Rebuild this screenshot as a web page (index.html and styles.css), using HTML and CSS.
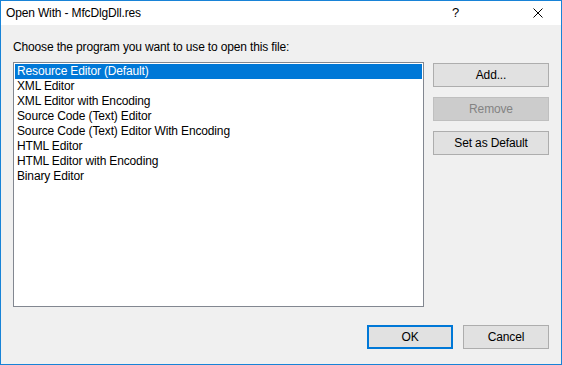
FILE: index.html
```html
<!DOCTYPE html>
<html lang="en">
<head>
  <meta charset="UTF-8" />
  <title>Open With - MfcDlgDll.res</title>
  <link rel="stylesheet" href="styles.css">
</head>
<body>
  <div class="window">
    <div class="titlebar">
      <span class="title">Open With - MfcDlgDll.res</span>
      <span class="help">?</span>
      <span class="close">
        <svg width="10" height="10" viewBox="0 0 10 10"><path d="M0.5 0.5 L9.5 9.5 M9.5 0.5 L0.5 9.5" stroke="#000" stroke-width="1" fill="none"/></svg>
      </span>
    </div>
    <div class="dialog">
      <div class="prompt">Choose the program you want to use to open this file:</div>
      <div class="main">
        <ul class="list">
          <li class="selected">Resource Editor (Default)</li>
          <li>XML Editor</li>
          <li>XML Editor with Encoding</li>
          <li>Source Code (Text) Editor</li>
          <li>Source Code (Text) Editor With Encoding</li>
          <li>HTML Editor</li>
          <li>HTML Editor with Encoding</li>
          <li>Binary Editor</li>
        </ul>
        <div class="side">
          <button class="btn">Add...</button>
          <button class="btn" disabled>Remove</button>
          <button class="btn">Set as Default</button>
        </div>
      </div>
      <div class="footer">
        <button class="btn small default">OK</button>
        <button class="btn small">Cancel</button>
      </div>
    </div>
  </div>
</body>
</html>
```
FILE: styles.css
```css
* {
  box-sizing: border-box;
}
body {
  margin: 0;
  font-family: 'Liberation Sans', Arial, sans-serif;
  font-size: 12px;
  letter-spacing: -0.15px;
  color: #000;
}
.window {
  width: 562px;
  height: 365px;
  border: 1px solid #1883d7;
  display: flex;
  flex-direction: column;
}
.titlebar {
  height: 24px;
  background: #fff;
  display: flex;
  align-items: center;
}
.title {
  flex: 1;
  padding-left: 5px;
  padding-bottom: 1px;
}
.help {
  width: 14px;
  margin-right: 67px;
  font-size: 13px;
  padding-bottom: 1px;
}
.close {
  width: 10px;
  height: 10px;
  margin-right: 18px;
  display: flex;
}
.dialog {
  flex: 1;
  background: #f0f0f0;
  padding: 15px 12px 15px 12px;
  display: flex;
  flex-direction: column;
}
.prompt {
  height: 15px;
  line-height: 15px;
  margin-bottom: 7px;
}
.main {
  display: flex;
  gap: 9px;
}
.list {
  width: 411px;
  height: 245px;
  margin: 0;
  padding: 1px;
  list-style: none;
  background: #fff;
  border: 1px solid #828790;
}
.list li {
  height: 15px;
  line-height: 14px;
  padding-left: 2px;
  white-space: nowrap;
}
.list li.selected {
  background: #0078d7;
  color: #fff;
}
.side {
  display: flex;
  flex-direction: column;
  gap: 10px;
  padding-top: 1px;
}
.btn {
  width: 116px;
  height: 24px;
  font-family: inherit;
  font-size: 12px;
  letter-spacing: inherit;
  color: #000;
  background: #e1e1e1;
  border: 1px solid #adadad;
  padding: 0;
}
.btn:disabled {
  background: #cccccc;
  border-color: #bfbfbf;
  color: #838383;
}
.footer {
  margin-top: 18px;
  display: flex;
  justify-content: flex-end;
  gap: 10px;
}
.btn.small {
  width: 86px;
}
.btn.default {
  border: 2px solid #0078d7;
}
```
